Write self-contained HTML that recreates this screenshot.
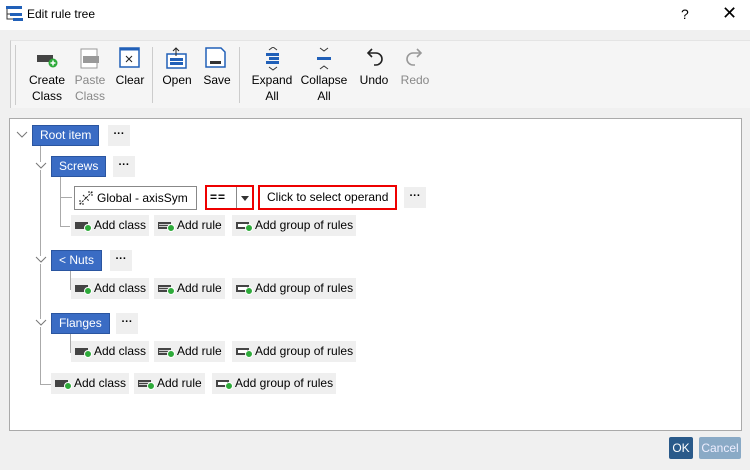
<!DOCTYPE html>
<html><head><style>
*{box-sizing:border-box;margin:0;padding:0}
body{width:750px;height:470px;background:#f0f0f0;font-family:"Liberation Sans",sans-serif;font-size:12px;color:#000;position:relative;overflow:hidden}
.a{position:absolute}
.title{left:0;top:0;width:750px;height:30px;background:#fff}
.tb{left:10px;top:40px;width:740px;height:68px;background:#f5f5f5;border-left:1px solid #ccc;border-top:1px solid #e4e4e4}
.lbl{position:absolute;text-align:center;font-size:12px;line-height:16px}
.gray{color:#888}
.panel{left:9px;top:118px;width:733px;height:313px;background:#fff;border:1px solid #aaa}
.node{position:absolute;background:#3a6cc4;color:#fff;border:1px solid #2a55a0;height:21px;line-height:19px;padding:0 7px}
.dots{position:absolute;background:#efefef;width:22px;height:21px;text-align:center;line-height:19px;font-weight:bold;font-size:11px}
.btn{position:absolute;background:#efefef;height:21px;line-height:21px;padding-left:23px;padding-right:3px}
.btn i{position:absolute;left:4px;top:7px;width:13px;height:7px;background:#444}
.btn i.r{background:repeating-linear-gradient(#444 0 1px,#ccc 1px 2px);border:1px solid #444}
.btn i.g{background:#fff;border:2px solid #444}
.btn b{position:absolute;left:13px;top:9px;width:8px;height:8px;border-radius:50%;background:#2eaa3a;border:1px solid #fff}
.vl{position:absolute;border-left:1px solid #aaa}
.hl{position:absolute;border-top:1px solid #aaa}
.chev{position:absolute;width:12px;height:8px}
</style></head><body>
<div class="a title">
 <svg class="a" style="left:6px;top:5px" width="18" height="16"><rect x="0" y="1" width="16" height="3" fill="#2160b8"/><rect x="4" y="8" width="12" height="3" fill="#2160b8"/><rect x="7" y="13" width="10" height="3" fill="#2160b8"/><path d="M1 4V14H7M1 9H4" stroke="#333" fill="none"/></svg>
 <div class="a" style="left:27px;top:7px;font-size:12px">Edit rule tree</div>
 <div class="a" style="left:681px;top:6px;font-size:14px">?</div>
 <div class="a" style="left:722px;top:3px;font-size:18px">✕</div>
</div>
<div class="a tb">
 <div class="vl" style="left:4px;top:4px;height:60px;border-color:#ccc"></div>
 <div class="vl" style="left:141px;top:6px;height:56px;border-color:#ccc"></div>
 <div class="vl" style="left:228px;top:6px;height:56px;border-color:#ccc"></div>
 <svg class="a" style="left:25px;top:8px" width="24" height="22"><rect x="1" y="6" width="16" height="7" fill="#444"/><circle cx="17" cy="14" r="4.5" fill="#2eaa3a"/><path d="M17 11.5v5M14.5 14h5" stroke="#fff" stroke-width="1.5"/></svg>
 <svg class="a" style="left:68px;top:7px" width="22" height="22"><rect x="2" y="1" width="16" height="19" fill="#fff" stroke="#999"/><rect x="4" y="8" width="16" height="7" fill="#999"/></svg>
 <svg class="a" style="left:108px;top:6px" width="22" height="22"><rect x="1" y="1" width="19" height="19" fill="#fff" stroke="#2160b8" stroke-width="1.5"/><path d="M1 2h19" stroke="#2160b8" stroke-width="3"/><path d="M7 9l6 6M13 9l-6 6" stroke="#222"/></svg>
 <svg class="a" style="left:154px;top:6px" width="24" height="24"><rect x="2" y="7" width="19" height="14" fill="#fff" stroke="#2160b8" stroke-width="1.5"/><rect x="5" y="11" width="13" height="3" fill="#2160b8"/><rect x="5" y="15" width="13" height="3" fill="#2160b8"/><path d="M11 1v8M8 4l3-3 3 3" stroke="#222" fill="none"/></svg>
 <svg class="a" style="left:194px;top:6px" width="22" height="22"><path d="M1 1h15l4 4v15H1z" fill="#fff" stroke="#2160b8" stroke-width="1.5"/><rect x="5" y="14" width="11" height="3" fill="#333"/></svg>
 <svg class="a" style="left:252px;top:6px" width="20" height="24"><path d="M6 3l4-3 4 3M6 20l4 3 4-3" stroke="#333" fill="none"/><rect x="3" y="6" width="13" height="3" fill="#2160b8"/><rect x="6" y="10" width="10" height="3" fill="#2160b8"/><rect x="3" y="14" width="13" height="3" fill="#2160b8"/></svg>
 <svg class="a" style="left:303px;top:6px" width="20" height="24"><path d="M6 1l4 3 4-3M6 22l4-3 4 3" stroke="#333" fill="none"/><rect x="3" y="10" width="14" height="3" fill="#2160b8"/></svg>
 <svg class="a" style="left:352px;top:6px" width="22" height="24"><path d="M6 6h7a6 6 0 0 1 0 12h-2" stroke="#222" stroke-width="1.6" fill="none"/><path d="M9 2L5 6l4 4" stroke="#222" stroke-width="1.6" fill="none"/></svg>
 <svg class="a" style="left:393px;top:6px" width="22" height="24"><path d="M16 6H9a6 6 0 0 0 0 12h2" stroke="#999" stroke-width="1.6" fill="none"/><path d="M13 2l4 4-4 4" stroke="#999" stroke-width="1.6" fill="none"/></svg>
 <div class="lbl" style="left:15px;top:31px;width:42px">Create<br>Class</div>
 <div class="lbl gray" style="left:58px;top:31px;width:42px">Paste<br>Class</div>
 <div class="lbl" style="left:100px;top:31px;width:38px">Clear</div>
 <div class="lbl" style="left:146px;top:31px;width:40px">Open</div>
 <div class="lbl" style="left:186px;top:31px;width:40px">Save</div>
 <div class="lbl" style="left:236px;top:31px;width:50px">Expand<br>All</div>
 <div class="lbl" style="left:287px;top:31px;width:52px">Collapse<br>All</div>
 <div class="lbl" style="left:343px;top:31px;width:40px">Undo</div>
 <div class="lbl gray" style="left:384px;top:31px;width:40px">Redo</div>
</div>
<div class="a panel">
 <svg class="chev" style="left:6px;top:12px"><path d="M1 1l5 5 5-5" stroke="#777" fill="none"/></svg>
 <div class="node" style="left:22px;top:6px">Root item</div>
 <div class="dots" style="left:98px;top:6px">···</div>
 <div class="vl" style="left:30px;top:27px;height:238px"></div>
 <div class="hl" style="left:30px;top:265px;width:12px"></div>
 <svg class="chev" style="left:25px;top:43px;background:#fff"><path d="M1 1l5 5 5-5" stroke="#777" fill="none"/></svg>
 <div class="node" style="left:41px;top:37px">Screws</div>
 <div class="dots" style="left:103px;top:37px">···</div>
 <div class="vl" style="left:50px;top:58px;height:50px"></div>
 <div class="hl" style="left:50px;top:78px;width:12px"></div>
 <div class="hl" style="left:50px;top:107px;width:10px"></div>
 <div class="a" style="left:64px;top:67px;width:123px;height:24px;border:1px solid #888;background:#fff;padding-left:22px;line-height:22px">Global - axisSym
  <svg class="a" style="left:4px;top:4px" width="14" height="14"><path d="M1 13L13 1M9 1h4v4M1 9v4h4M4 4l6 6" stroke="#222" fill="none" stroke-dasharray="2 1"/></svg></div>
 <div class="a" style="left:195px;top:66px;width:49px;height:25px;border:2px solid #e00;background:#fff;line-height:21px;padding-left:3px;font-weight:bold;letter-spacing:1px">==
  <div class="vl" style="left:29px;top:0;height:21px;border-color:#888"></div>
  <div class="a" style="left:34px;top:9px;border:4px solid transparent;border-top:5px solid #333"></div></div>
 <div class="a" style="left:248px;top:66px;width:139px;height:25px;border:2px solid #e00;background:#fff;line-height:21px;padding-left:7px">Click to select operand</div>
 <div class="dots" style="left:394px;top:68px">···</div>
 <div class="btn" style="left:61px;top:96px"><i></i><b></b>Add class</div>
 <div class="btn" style="left:144px;top:96px"><i class="r"></i><b></b>Add rule</div>
 <div class="btn" style="left:222px;top:96px"><i class="g"></i><b></b>Add group of rules</div>
 <svg class="chev" style="left:25px;top:137px;background:#fff"><path d="M1 1l5 5 5-5" stroke="#777" fill="none"/></svg>
 <div class="node" style="left:41px;top:131px">&lt; Nuts</div>
 <div class="dots" style="left:100px;top:131px">···</div>
 <div class="vl" style="left:60px;top:152px;height:18px"></div>
 <div class="hl" style="left:60px;top:170px;width:4px"></div>
 <div class="btn" style="left:61px;top:159px"><i></i><b></b>Add class</div>
 <div class="btn" style="left:144px;top:159px"><i class="r"></i><b></b>Add rule</div>
 <div class="btn" style="left:222px;top:159px"><i class="g"></i><b></b>Add group of rules</div>
 <svg class="chev" style="left:25px;top:200px;background:#fff"><path d="M1 1l5 5 5-5" stroke="#777" fill="none"/></svg>
 <div class="node" style="left:41px;top:194px">Flanges</div>
 <div class="dots" style="left:106px;top:194px">···</div>
 <div class="vl" style="left:60px;top:215px;height:18px"></div>
 <div class="hl" style="left:60px;top:233px;width:4px"></div>
 <div class="btn" style="left:61px;top:222px"><i></i><b></b>Add class</div>
 <div class="btn" style="left:144px;top:222px"><i class="r"></i><b></b>Add rule</div>
 <div class="btn" style="left:222px;top:222px"><i class="g"></i><b></b>Add group of rules</div>
 <div class="btn" style="left:41px;top:254px"><i></i><b></b>Add class</div>
 <div class="btn" style="left:124px;top:254px"><i class="r"></i><b></b>Add rule</div>
 <div class="btn" style="left:202px;top:254px"><i class="g"></i><b></b>Add group of rules</div>
</div>
<div class="a" style="left:669px;top:437px;width:24px;height:22px;background:#2a5a8a;color:#fff;border-radius:2px;text-align:center;line-height:22px">OK</div>
<div class="a" style="left:699px;top:437px;width:42px;height:22px;background:#8aaac6;color:#eef;border-radius:2px;text-align:center;line-height:22px">Cancel</div>
</body></html>
